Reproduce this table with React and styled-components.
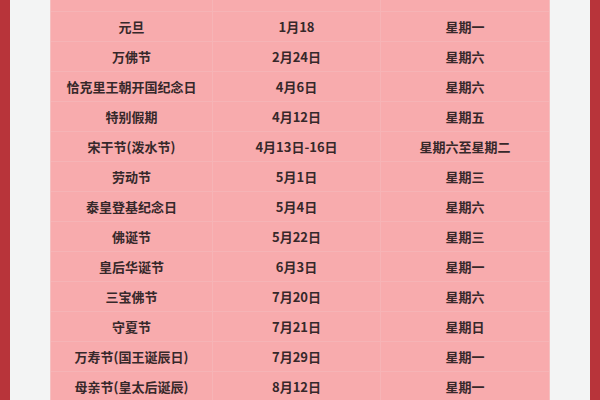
import React from "react";
import styled, { createGlobalStyle } from "styled-components";

const rows = [
  ["元旦", "1月18", "星期一"],
  ["万佛节", "2月24日", "星期六"],
  ["恰克里王朝开国纪念日", "4月6日", "星期六"],
  ["特别假期", "4月12日", "星期五"],
  ["宋干节(泼水节)", "4月13日-16日", "星期六至星期二"],
  ["劳动节", "5月1日", "星期三"],
  ["泰皇登基纪念日", "5月4日", "星期六"],
  ["佛诞节", "5月22日", "星期三"],
  ["皇后华诞节", "6月3日", "星期一"],
  ["三宝佛节", "7月20日", "星期六"],
  ["守夏节", "7月21日", "星期日"],
  ["万寿节(国王诞辰日)", "7月29日", "星期一"],
  ["母亲节(皇太后诞辰)", "8月12日", "星期一"],
];

const GlobalStyle = createGlobalStyle`
  html, body {
    margin: 0;
    padding: 0;
    width: 600px;
    height: 400px;
    overflow: hidden;
    background: #f2f3f3;
  }
`;

const Page = styled.div`
  display: flex;
  width: 600px;
  height: 400px;
  overflow: hidden;
  background: #f2f3f3;
  font-family: "Noto Sans CJK SC", "Noto Sans", sans-serif;
`;

const Stripe = styled.div`
  width: 10px;
  flex: none;
  background: #b8343a;
`;

const Gutter = styled.div`
  width: 40px;
  flex: none;
  background: #f3f4f4;
`;

const Table = styled.div`
  width: 500px;
  flex: none;
  margin-top: -18px;
  background: #f8abad;
  border-left: 1px solid #f5bfc0;
  border-right: 1px solid #f5bfc0;
  box-sizing: border-box;
`;

const Row = styled.div`
  display: grid;
  grid-template-columns: 162px 168px 1fr;
  height: 30px;
  box-sizing: border-box;
  border-bottom: 1px solid #f6b4b6;
`;

const Cell = styled.div`
  display: flex;
  align-items: center;
  justify-content: center;
  font-size: 13px;
  font-weight: 700;
  color: #36282a;
  white-space: nowrap;
  border-right: ${(p) => (p.$last ? "none" : "1px solid #f6b4b6")};
`;

export default function App() {
  return (
    <>
      <GlobalStyle />
      <Page>
        <Stripe />
        <Gutter />
        <Table>
          <Row>
            <Cell />
            <Cell />
            <Cell $last />
          </Row>
          {rows.map(([name, date, day]) => (
            <Row key={name}>
              <Cell>{name}</Cell>
              <Cell>{date}</Cell>
              <Cell $last>{day}</Cell>
            </Row>
          ))}
        </Table>
        <Gutter />
        <Stripe />
      </Page>
    </>
  );
}
